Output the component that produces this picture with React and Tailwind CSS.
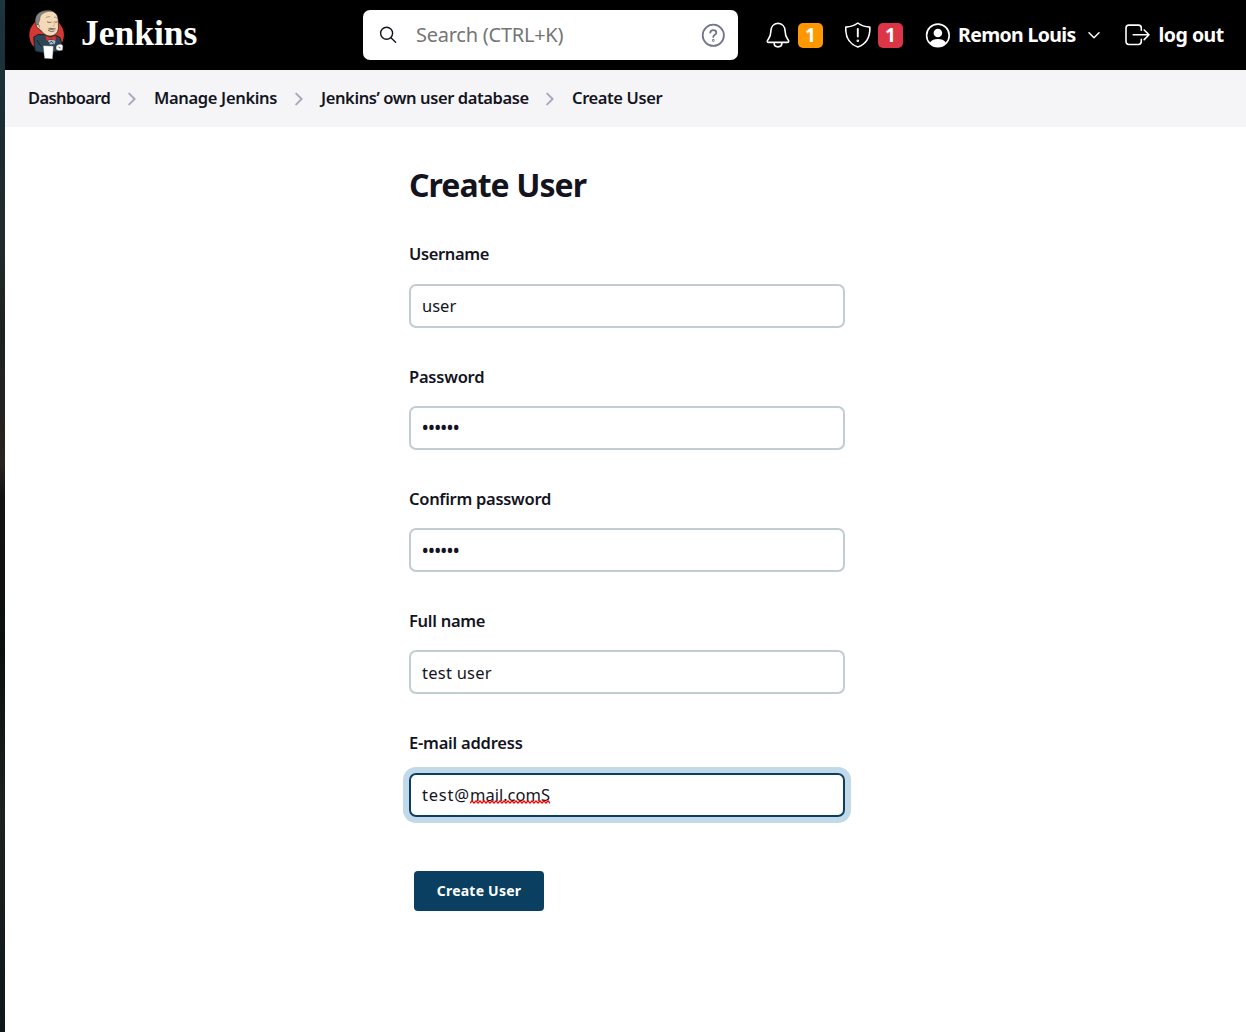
function Butler() {
  return (
    <svg className="block h-[50px] w-[36px] shrink-0" viewBox="0 0 36 50" fill="none">
      <ellipse cx="17.6" cy="25" rx="17.3" ry="17.5" fill="#d33833" />
      <path d="M9 24.5 L4.8 27 Q5 36 6.4 41.5 L13 42.5 L28 41.5 L33.8 37 L31 27.5 L26 25 Z" fill="#2b4656" stroke="#111" strokeWidth=".8" />
      <path d="M7.2 15 C5.5 12 6.2 7 8.8 4 C12 .5 20 -.3 24 1.5 C27.5 3 29 6 29.2 10 L29.5 18 C29 23 25.5 26 21 26 C17 26 14 23 11.5 20 L7.5 17 Z" fill="#f3d9b8" stroke="#222" strokeWidth=".7" />
      <path d="M7.2 14.5 C5.8 9 7.4 4.8 11 2.6 C14.5 .4 19 .3 22.5 1.1 C18 1.2 14 2.8 12 5 C10.8 6.6 11 9.6 10.2 11.6 L9 14.6 Z" fill="#858683" stroke="#444" strokeWidth=".4" />
      <path d="M17.3 7.4 Q19 6 20.8 6.7 M25.4 7.2 Q26.8 6.6 27.8 7.8" stroke="#8a7660" strokeWidth=".7" strokeLinecap="round" />
      <path d="M18.4 12 Q20.2 13.2 22.2 12.2 M25.6 12 Q26.8 13 28 12 M8.4 14.4 Q10.4 13.4 10.2 17" stroke="#4c3d30" strokeWidth=".7" strokeLinecap="round" />
      <path d="M24.4 12 Q26.8 15.6 24.4 16.4" stroke="#c29c77" strokeWidth=".6" strokeLinecap="round" />
      <path d="M18.6 19 Q20.8 17.2 23.4 18 Q26.4 17.6 27.4 19.4 Q25 19 23.4 20 Q21 20.4 18.6 19 Z" fill="#8a7b6b" />
      <path d="M19.4 20.6 Q22 22.4 25.2 21" stroke="#4c3d30" strokeWidth=".7" strokeLinecap="round" />
      <path d="M18 29 L22 30 L27 28.5 L25.8 34 L21 34.6 Z" fill="#9fc3d4" />
      <path d="M16.6 25.6 L21.5 27.4 L26.8 25.6 L27 30.7 L22 29.2 L17 31 Z" fill="#d33833" stroke="#7f1515" strokeWidth=".4" />
      <path d="M8 30 Q10 35 12.5 36.5 M20.2 33.4 L22.2 31.2 L24.6 33.4" stroke="#101c24" strokeWidth=".8" />
      <path d="M14 35.5 L24.6 36 L23.6 49 L15.4 48.5 Z" fill="#fff" stroke="#333" strokeWidth=".5" />
      <path d="M27 36 Q31 32.5 34 35.5 L33.8 40 Q30 42 27 39.5 Z" fill="#fff" stroke="#333" strokeWidth=".6" />
      <path d="M29.5 37 L31.5 38.2" stroke="#333" strokeWidth=".8" />
    </svg>
  );
}

function SearchIcon() {
  return (
    <svg className="h-[18px] w-[18px] shrink-0" viewBox="0 0 18 18" fill="none" stroke="#14141f" strokeWidth="1.4" strokeLinecap="round">
      <circle cx="7.6" cy="7.3" r="6" />
      <path d="M12 11.8 L16.6 16.3" />
    </svg>
  );
}

function HelpIcon() {
  return (
    <svg className="h-6 w-6 shrink-0" viewBox="0 0 24 24" fill="none" stroke="#73738c" strokeWidth="1.8" strokeLinecap="round" strokeLinejoin="round">
      <circle cx="12.3" cy="12.3" r="10.6" />
      <path d="M9.3 9.6 C9.5 8.1 10.7 7.2 12.3 7.2 C14.1 7.2 15.3 8.2 15.3 9.7 C15.3 11.8 12.3 11.9 12.3 14" />
      <circle cx="12.3" cy="17.4" r=".4" />
    </svg>
  );
}

function BellIcon() {
  return (
    <svg className="h-[26px] w-6 shrink-0" viewBox="0 0 24 26" fill="none" stroke="#fff" strokeWidth="1.6" strokeLinecap="round" strokeLinejoin="round">
      <path d="M12 1.2 C7.6 1.6 4.9 4.8 4.9 9 C4.9 14 3.6 15.6 2.1 17.6 C.7 19.4 1.2 20.4 3 20.4 H21 C22.8 20.4 23.3 19.4 21.9 17.6 C20.4 15.6 19.1 14 19.1 9 C19.1 4.8 16.4 1.6 12 1.2 Z" />
      <path d="M8.1 20.8 C8.1 23.3 9.7 24.9 12 24.9 C14.3 24.9 15.9 23.3 15.9 20.8" />
    </svg>
  );
}

function ShieldIcon() {
  return (
    <svg className="h-[26px] w-[27px] shrink-0" viewBox="0 0 27 26" fill="none" stroke="#fff" strokeWidth="1.6" strokeLinecap="round" strokeLinejoin="round">
      <path d="M12.8 1 C9.8 3.4 4.8 4.9 .8 5.1 C.3 14 3.2 21.4 12.8 25 C22.4 21.4 25.3 14 24.8 5.1 C20.8 4.9 15.8 3.4 12.8 1 Z" />
      <path d="M12.8 7 V14.6" strokeWidth="1.9" />
      <circle cx="12.8" cy="18.8" r=".5" />
    </svg>
  );
}

function PersonIcon() {
  return (
    <svg className="h-[25px] w-[25px] shrink-0" viewBox="0 0 25 25" fill="none">
      <circle cx="12.9" cy="12.4" r="11.3" stroke="#fff" strokeWidth="1.6" />
      <circle cx="12.9" cy="10" r="4.3" fill="#fff" />
      <path d="M4.9 19.6 C6.6 17 9.4 16 12.9 16 C16.4 16 19.2 17 20.9 19.6 C19 22 16.2 23.4 12.9 23.4 C9.6 23.4 6.8 22 4.9 19.6 Z" fill="#fff" />
    </svg>
  );
}

function LogoutIcon() {
  return (
    <svg className="h-[22px] w-[25px] shrink-0" viewBox="0 0 25 22" fill="none" stroke="#fff" strokeWidth="1.6" strokeLinecap="round" strokeLinejoin="round">
      <path d="M16.3 6.3 V4 Q16.3 1.1 13.4 1.1 H3.9 Q1 1.1 1 4 V17.6 Q1 20.5 3.9 20.5 H13.4 Q16.3 20.5 16.3 17.6 V15.4" />
      <path d="M8.2 10.8 H24 M19.2 6 L24 10.8 L19.2 15.6" />
    </svg>
  );
}

function Chevron() {
  return (
    <svg className="h-[14px] w-2 shrink-0" viewBox="0 0 8 14" fill="none" stroke="#a9a9bd" strokeWidth="2" strokeLinecap="round" strokeLinejoin="round">
      <path d="M1.2 1.6 L6.6 7 L1.2 12.4" />
    </svg>
  );
}

// Spelling mark drawn under a misspelt word.
function Squiggle() {
  return (
    <svg className="absolute bottom-[2px] left-0 h-1 w-full" fill="none" stroke="#f00" strokeWidth="1.3">
      <defs>
        <pattern id="wave" width="4" height="4" patternUnits="userSpaceOnUse">
          <path d="M-1 2 L0 3 L2 1 L4 3 L5 2" />
        </pattern>
      </defs>
      <rect width="100%" height="4" fill="url(#wave)" stroke="none" />
    </svg>
  );
}

function Crumb({ children, className }) {
  return <span className={`shrink-0 whitespace-nowrap ${className}`}>{children}</span>;
}

function Field({ label, labelClass = "", valueClass = "", focused, children }) {
  return (
    <div className="mb-[36px] h-[86px]">
      <div className="flex h-[42px] items-start">
        <span className={`text-[16.5px] leading-6 font-[560] whitespace-nowrap ${labelClass}`}>{label}</span>
      </div>
      <div
        className={`flex h-11 w-[436px] items-center rounded-[7px] border-2 px-[11px] text-[16.5px] whitespace-nowrap ${
          focused ? "border-[#0b3f61] shadow-[0_0_0_6px_#c2d9ea]" : "border-[#c1cdd1]"
        }`}
      >
        <span className={valueClass}>{children}</span>
      </div>
    </div>
  );
}

export default function App() {
  return (
    <div className="flex h-[1032px] w-[1246px] overflow-hidden bg-white font-['Noto_Sans',sans-serif] text-[#14141f]">
      <div className="w-[5px] shrink-0 bg-[linear-gradient(180deg,#1c353f_0%,#1b2b31_14%,#242a2b_23%,#1d2122_32%,#292321_45%,#131313_48%,#0d0e0e_62%,#1e2120_79%,#10161a_100%)]" />
      <div className="min-w-0 flex-1">
        <header className="flex h-[70px] items-center bg-black text-white">
          <div className="flex w-[358px] items-center pl-6">
            <Butler />
            <span className="ml-4 pb-1 font-['Liberation_Serif',serif] text-[35.5px] leading-[50px] font-bold">Jenkins</span>
          </div>
          <div className="flex h-[50px] w-[375px] items-center rounded-[7px] bg-white pr-[13px] pl-4">
            <SearchIcon />
            <span className="ml-[19px] flex-1 text-[20px] tracking-[-0.25px] whitespace-nowrap text-[#757575]">Search (CTRL+K)</span>
            <HelpIcon />
          </div>
          <div className="ml-7 flex items-center gap-2">
            <BellIcon />
            <span className="flex h-[25px] w-[25px] items-center justify-center rounded-[5px] bg-[#ff9800] text-[19px] font-bold">1</span>
          </div>
          <div className="ml-[22px] flex items-center gap-[6px]">
            <ShieldIcon />
            <span className="flex h-[25px] w-[25px] items-center justify-center rounded-[5px] bg-[#dc3545] text-[19px] font-bold">1</span>
          </div>
          <div className="ml-[22px] flex items-center">
            <PersonIcon />
            <span className="ml-2 w-[130px] text-[19.5px] font-bold tracking-[-0.65px] whitespace-nowrap">Remon Louis</span>
            <svg className="h-2 w-3" viewBox="0 0 12 8" fill="none" stroke="#fff" strokeWidth="1.5" strokeLinecap="round" strokeLinejoin="round">
              <path d="M1 1.8 L6 6.8 L11 1.8" />
            </svg>
          </div>
          <div className="ml-[25px] flex items-center">
            <LogoutIcon />
            <span className="ml-[8.5px] text-[19.5px] font-bold tracking-[-0.5px] whitespace-nowrap">log out</span>
          </div>
        </header>
        <nav className="flex h-[57px] items-center gap-[18px] bg-[#f5f5f8] pl-[23px] text-[16.5px] font-[560]">
          <Crumb className="w-[82px] tracking-[-0.6px]">Dashboard</Crumb>
          <Chevron />
          <Crumb className="w-[123px] tracking-[-0.33px]">Manage Jenkins</Crumb>
          <Chevron />
          <Crumb className="w-[207px] tracking-[-0.4px]">Jenkins’ own user database</Crumb>
          <Chevron />
          <Crumb className="tracking-[-0.4px]">Create User</Crumb>
        </nav>
        <main className="flex justify-start pl-[404px]">
          <div className="pt-[38px]">
            <h1 className="mb-[37px] text-[32px] leading-[40px] font-bold tracking-[-0.95px] whitespace-nowrap">Create User</h1>
            <Field label="Username" labelClass="tracking-[-0.38px]">user</Field>
            <Field label="Password" labelClass="mt-px tracking-[-0.22px]" valueClass="text-[17px] font-[600] tracking-[-0.2px]">••••••</Field>
            <Field label="Confirm password" labelClass="mt-px tracking-[-0.29px]" valueClass="pt-px text-[17px] font-[600] tracking-[-0.2px]">••••••</Field>
            <Field label="Full name" labelClass="mt-px tracking-[-0.28px]" valueClass="pt-[2px] tracking-[0.25px]">test user</Field>
            <div className="pt-px">
              <Field label="E-mail address" labelClass="tracking-[-0.22px]" focused>
                <span className="tracking-[0.8px]">test@</span>
                <span className="relative">
                  mail.comS
                  <Squiggle />
                </span>
              </Field>
            </div>
            <button className="mt-[54px] ml-[5px] flex h-10 w-[130px] items-center justify-center rounded-[4px] bg-[#0a3f61] pb-px text-[14px] font-bold tracking-[0.22px] text-white">Create User</button>
          </div>
        </main>
      </div>
    </div>
  );
}
